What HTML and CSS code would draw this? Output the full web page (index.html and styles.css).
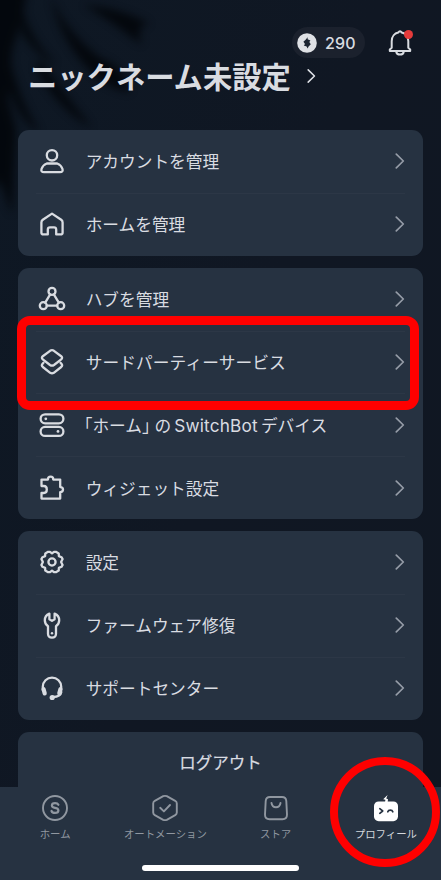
FILE: index.html
```html
<!DOCTYPE html>
<html lang="ja">
<head>
<meta charset="utf-8">
<title>プロフィール</title>
<link rel="stylesheet" href="styles.css">
</head>
<body>
<svg width="0" height="0" class="defs"><symbol id="chev" viewBox="0 0 10 16"><path d="M1.3 1.2 8.3 8 1.3 14.8"/></symbol></svg>
<div class="screen">
  <svg class="leaves" viewBox="0 0 220 260"><path d="M-15 -15H28L22 20 12 50 8 100 16 130 12 215 0 180 -15 200Z"/><path d="M20 0Q28 38 56 64 44 62 22 34ZM50 -5Q64 30 100 58 124 66 130 92 100 88 76 54 58 30 50 -5ZM84 5Q120 8 150 24 134 24 142 45 110 20 84 5ZM8 50Q18 100 40 132 18 122 6 80ZM40 60Q66 96 92 128 58 110 36 68Z"/></svg>
  <header class="header">
    <div class="tools">
      <div class="points">
        <svg class="coin" viewBox="0 0 20 20"><circle cx="10" cy="10" r="9.8" fill="#dfe1e5"/><path d="M10.6 4.3V6.2L13.4 7.4 12.3 9 13.8 11.2 11.6 13.4 10.6 15.4 9.6 13.6 6.8 12.6 8 11 6.4 8.8 8.6 6.8Z" fill="#1c2431"/></svg>
        <span>290</span>
      </div>
      <div class="bell">
        <svg viewBox="0 0 26 28"><path d="M4.7 18.8V12.2C4.7 7.5 7.8 4.3 11.2 3.6Q13 1 14.8 3.6C18.2 4.3 21.3 7.5 21.3 12.2V18.8L23.2 20.4V22H2.8V20.4Z"/><path d="M9.2 22.6Q9.6 25.6 13 25.6T16.8 22.6"/></svg>
        <i class="dot"></i>
      </div>
    </div>
    <div class="name"><h1>ニックネーム未設定</h1><svg class="chev"><use href="#chev"/></svg></div>
  </header>
  <main class="cards">
    <section class="card">
      <div class="row"><svg class="ic" viewBox="0 0 30 30"><circle cx="15" cy="9.3" r="5.2"/><path d="M9.8 17.5H20.2Q24.2 19 25.5 23Q26.3 26.2 23 26.2H7Q3.7 26.2 4.5 23Q5.8 19 9.8 17.5Z"/></svg><span>アカウントを管理</span><svg class="chev"><use href="#chev"/></svg></div>
      <div class="row"><svg class="ic" viewBox="0 0 30 30"><path d="M15 4.6 24.2 10.8Q25.6 11.8 25.6 13.5V23.4Q25.6 25.4 23.6 25.4H19.2V20.6Q19.2 18.4 17 18.4H13Q10.8 18.4 10.8 20.6V25.4H6.4Q4.4 25.4 4.4 23.4V13.5Q4.4 11.8 5.8 10.8Z"/></svg><span>ホームを管理</span><svg class="chev"><use href="#chev"/></svg></div>
    </section>
    <section class="card">
      <div class="row"><svg class="ic" viewBox="0 0 30 30"><circle cx="15" cy="7.4" r="3.5"/><circle cx="6.3" cy="21.7" r="3.5"/><circle cx="23.7" cy="21.7" r="3.5"/><path d="M13.2 10.4 8.2 18.7M16.8 10.4 21.8 18.7M9.8 21.7H20.2"/></svg><span>ハブを管理</span><svg class="chev"><use href="#chev"/></svg></div>
      <div class="row"><svg class="ic" viewBox="0 0 30 30"><path d="M13.4 3.6Q15 2.6 16.6 3.6L24.2 9.2Q26 10.8 24.2 12.4L17 18Q15 19.4 13 18L5.8 12.4Q4 10.8 5.8 9.2Z"/><path d="M6.5 15.8 5.4 17Q4.2 18.5 5.8 20L13.2 25.8Q15 27 16.8 25.8L24.2 20Q25.8 18.5 24.6 17L23.5 15.8"/></svg><span class="wide">サードパーティーサービス</span><svg class="chev"><use href="#chev"/></svg></div>
      <div class="row"><svg class="ic" viewBox="0 0 30 30"><rect x="3.6" y="4.3" width="22.8" height="9" rx="4.5"/><rect x="3.6" y="16.9" width="22.8" height="9" rx="4.5"/><circle class="fill" cx="8.8" cy="8.8" r="1.4"/><circle class="fill" cx="21" cy="21.4" r="1.4"/></svg><span class="mixed"><span class="open">「</span>ホーム<span class="close">」</span>の<span class="latin">SwitchBot</span>デバイス</span><svg class="chev"><use href="#chev"/></svg></div>
      <div class="row"><svg class="ic" viewBox="0 0 30 30"><path d="M4.5 6.6H11V6Q11 3.6 13.6 3.6T16.2 6V6.6H23.2V14.1Q26 14.1 26 16.6T23.2 19.1V25.6H4.5V20H6.8Q9.8 20 9.8 16.5T6.8 13H4.5Z"/></svg><span>ウィジェット設定</span><svg class="chev"><use href="#chev"/></svg></div>
    </section>
    <section class="card">
      <div class="row"><svg class="ic" viewBox="0 0 30 30"><circle cx="15" cy="15" r="3.6"/><path d="M11.1 4.8H13L15 6.4 17 4.8H18.9L21.7 6.4 21.9 9.1 24.5 10.2 25.6 12 24.1 15 25.6 18 24.5 19.8 21.9 20.9 21.7 23.6 18.9 25.2H17L15 23.6 13 25.2H11.1L8.3 23.6 8.1 20.9 5.5 19.8 4.4 18 5.9 15 4.4 12 5.5 10.2 8.1 9.1 8.3 6.4Z"/></svg><span>設定</span><svg class="chev"><use href="#chev"/></svg></div>
      <div class="row"><svg class="ic" viewBox="0 0 30 30"><path d="M12.4 3.6V9.2L15 10.9 17.6 9.2V3.6Q22.2 5.5 22.2 10.3 22.2 14 19 16.3V24Q18.8 27.6 15 27.6T11 24V16.3Q7.8 14 7.8 10.3 7.8 5.5 12.4 3.6Z"/><circle class="fill" cx="15" cy="23.2" r="1.2"/></svg><span>ファームウェア修復</span><svg class="chev"><use href="#chev"/></svg></div>
      <div class="row"><svg class="ic" viewBox="0 0 30 30"><path d="M5.8 17V13.8A9.2 9.2 0 0 1 24.2 13.8V17M24.3 19Q23.5 23.8 16 24"/><path class="thick" d="M6.6 16.2 7.7 20.4M23.4 16.2 22.3 20.4"/><circle class="fill" cx="15.2" cy="24.5" r="2.6"/></svg><span>サポートセンター</span><svg class="chev"><use href="#chev"/></svg></div>
    </section>
    <section class="card logout">ログアウト</section>
  </main>
  <nav class="nav">
    <div class="tab"><svg viewBox="0 0 28 28"><circle cx="14" cy="14" r="12"/><path class="bold" d="M17.4 10.8Q16.6 9.2 14.1 9.2 10.9 9.2 10.9 11.5 10.9 13.2 14.1 13.8 17.4 14.4 17.4 16.5 17.4 18.9 14.1 18.9 11.2 18.9 10.5 17"/></svg><span>ホーム</span></div>
    <div class="tab"><svg viewBox="0 0 28 28"><path d="M12.2 2.2Q14 1.5 15.8 2.2L24.2 6.8Q25.8 7.8 25.8 9.4V18.6Q25.8 20.2 24.2 21.2L15.8 25.8Q14 26.5 12.2 25.8L3.8 21.2Q2.2 20.2 2.2 18.6V9.4Q2.2 7.8 3.8 6.8Z"/><path d="M9.2 13.8 12.9 17.4 19 11"/></svg><span>オートメーション</span></div>
    <div class="tab"><svg viewBox="0 0 28 28"><path d="M8 3H20Q24 3 24.3 7L25 20.5Q25.1 25.2 20.5 25.2H7.5Q2.9 25.2 3 20.5L3.7 7Q4 3 8 3Z"/><path d="M9.5 9Q10.2 13.3 14 13.3T18.5 9"/></svg><span>ストア</span></div>
    <div class="tab active"><svg viewBox="0 0 28 28"><rect class="face" x="2" y="7.4" width="24" height="19.8" rx="4.6"/><path class="face" d="M15.6 1 11.2 5.2 13.4 5.7 13 8.4H15.6L16 5.2 14.2 4.4Z"/><path class="eye" d="M7.8 14.7 10.7 17 7.8 19.3M15.8 17.8Q16.3 16.2 18.3 16.2T20.8 17.8"/></svg><span>プロフィール</span></div>
  </nav>
  <div class="homebar"></div>
  <div class="mark-box"></div>
  <div class="mark-circle"></div>
</div>
</body>
</html>
```
FILE: styles.css
```css
* { box-sizing: border-box; }
body { margin: 0; background: #111823; font-family: "Noto Sans CJK JP", sans-serif; }
svg { display: block; flex: none; fill: none; stroke: currentColor; stroke-linecap: round; stroke-linejoin: round; }
.defs { position: absolute; }
.screen {
  position: relative; width: 441px; height: 880px; overflow: hidden;
  display: flex; flex-direction: column; color: #d9dce1;
  background: linear-gradient(110deg, #0e1824, #101723 50%, #101722);
}
.leaves { position: absolute; left: 0; top: 0; width: 220px; height: 260px; overflow: visible; fill: #020509; stroke: none; filter: blur(4px); opacity: .85; }
.header, .cards { position: relative; }
.header { height: 130px; padding: 27px 28px 0 28px; flex: none; }
.tools { display: flex; justify-content: flex-end; align-items: center; height: 31px; gap: 22px; }
.points { display: flex; align-items: center; gap: 8px; width: 73px; height: 31px; padding-left: 5px; border-radius: 16px; background: #1b212d; font: 500 16px Inter, sans-serif; letter-spacing: .1px; }
.coin { width: 20px; height: 20px; stroke: none; }
.bell { position: relative; width: 26px; height: 28px; }
.bell svg { width: 26px; height: 28px; stroke-width: 2; }
.dot { position: absolute; top: 1px; right: 0; width: 9px; height: 9px; border-radius: 50%; background: #e53b3b; }
.name { display: flex; align-items: center; height: 36px; gap: 16px; }
.name h1 { margin: -3px 0 0; font-size: 29.3px; line-height: 36px; font-weight: 700; white-space: nowrap; }
.name .chev { width: 9px; height: 16px; color: #dfe2e7; }
.chev { width: 10px; height: 16px; stroke-width: 1.7; color: #959ca7; }
.cards { display: flex; flex-direction: column; gap: 12.4px; padding: 0 18px; flex: 1; min-height: 0; overflow: hidden; }
.card { flex: none; border-radius: 11px; background: #263241; padding: 0 18px; }
.row { display: flex; align-items: center; height: 62.75px; padding-bottom: 1px; font-size: 16.7px; line-height: 24px; white-space: nowrap; }
.row + .row { border-top: 1px solid #2c3746; }
.row .ic { width: 30px; height: 30px; margin: 0 19px 0 .7px; stroke-width: 2.3; }
.row .chev { margin-left: auto; }
.ic .fill { fill: currentColor; stroke: none; }
.ic .thick { stroke-width: 4.2; }
.wide { letter-spacing: .1px; }
.open, .close { font-feature-settings: "halt"; }
.open { margin-left: -1.6px; }
.close { margin-right: 4.2px; }
.latin { margin: 0 3px; font: 400 17.2px Inter, sans-serif; letter-spacing: .2px; }
.logout { height: 80px; line-height: 61px; text-align: center; font-size: 16.5px; -webkit-text-stroke: .2px currentColor; }
.nav { position: relative; flex: none; height: 93.5px; display: flex; background: #263241; color: #9097a0; padding-top: 7px; }
.tab { flex: 1; display: flex; flex-direction: column; align-items: center; font-size: 10.4px; line-height: 16px; gap: 4px; white-space: nowrap; }
.tab svg { width: 28px; height: 28px; stroke-width: 1.9; }
.tab .bold { stroke-width: 2.2; }
.active { color: #d4d8dd; }
.active .face { fill: #fff; stroke: none; }
.active .eye { stroke: #263241; stroke-width: 1.7; }
.homebar { position: absolute; left: 142px; top: 865px; width: 157px; height: 6px; border-radius: 3px; background: #fff; }
.mark-box { position: absolute; left: 17px; top: 316px; width: 402px; height: 94px; border: 9px solid #f00; border-radius: 13px; }
.mark-circle { position: absolute; left: 330px; top: 757px; width: 110px; height: 110px; border: 8.5px solid #f00; border-radius: 50%; }
```
